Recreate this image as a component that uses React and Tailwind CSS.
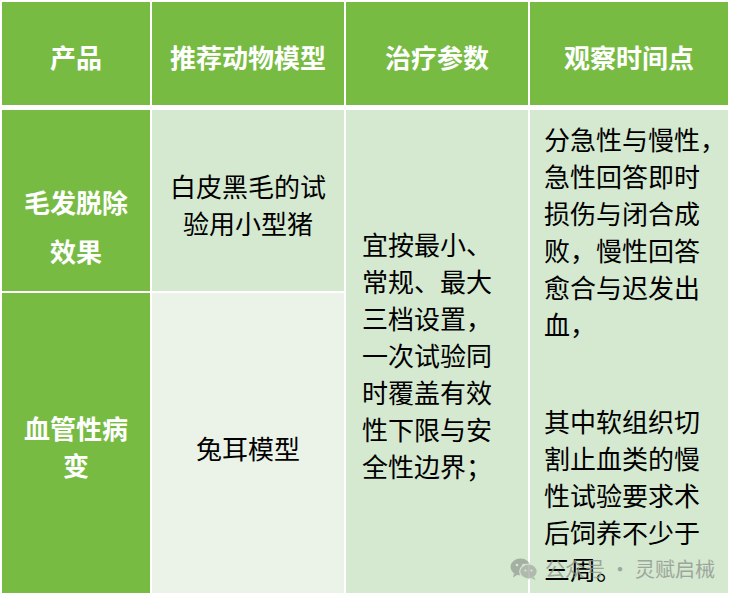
const font = { fontFamily: '"Noto Sans CJK SC", "Noto Sans", sans-serif' };

function WeChatIcon() {
  return (
    <svg width="28" height="22" viewBox="0 0 28 22" className="shrink-0">
      <ellipse cx="10.5" cy="9" rx="10" ry="8.5" fill="#9aa39a" />
      <path d="M4 15.5 L3 19.5 L7.5 16.8 Z" fill="#9aa39a" />
      <ellipse cx="18.5" cy="13.5" rx="8.8" ry="7.5" fill="#a7aea6" stroke="#d5e8d0" strokeWidth="1.2" />
      <path d="M24 19 L25.5 22 L21 20 Z" fill="#a7aea6" />
      <circle cx="7" cy="7" r="1.3" fill="#d5e8d0" />
      <circle cx="13.5" cy="7" r="1.3" fill="#d5e8d0" />
      <circle cx="15.5" cy="12.5" r="1.1" fill="#d5e8d0" />
      <circle cx="21.5" cy="12.5" r="1.1" fill="#d5e8d0" />
    </svg>
  );
}

export default function App() {
  const headers = ['产品', '推荐动物模型', '治疗参数', '观察时间点'];

  return (
    <div className="w-[731px] h-[596px] bg-white pt-[2px] pl-[2px] pr-[3px] pb-[3px] flex flex-col gap-[5px] relative overflow-hidden" style={font}>
      <div className="grid grid-cols-[148px_192px_182px_198px] gap-x-[2px] h-[103px]">
        {headers.map(h => (
          <div key={h} className="bg-[#78bb43] flex items-center justify-center pt-[5px] text-white font-bold text-[26px]">
            {h}
          </div>
        ))}
      </div>

      <div className="grid grid-cols-[148px_192px_182px_198px] grid-rows-[181px_300px] gap-x-[2px] gap-y-[2px] text-[26px] leading-[37px] text-black">
        <div className="bg-[#78bb43] flex flex-col items-center justify-center pt-[50px] text-white font-bold leading-[49px]">
          <span>毛发脱除</span>
          <span>效果</span>
        </div>
        <div className="bg-[#d5e8d0] flex flex-col items-center justify-center pt-[6px]">
          <span>白皮黑毛的试</span>
          <span>验用小型猪</span>
        </div>
        <div className="row-span-2 bg-[#d5e8d0] flex flex-col justify-center pl-[16px] pt-[5px] whitespace-nowrap">
          <span>宜按最小、</span>
          <span>常规、最大</span>
          <span>三档设置，</span>
          <span>一次试验同</span>
          <span>时覆盖有效</span>
          <span>性下限与安</span>
          <span>全性边界；</span>
        </div>
        <div className="row-span-2 bg-[#d5e8d0] flex flex-col pl-[14px] pt-[10px] whitespace-nowrap">
          <span>分急性与慢性，</span>
          <span>急性回答即时</span>
          <span>损伤与闭合成</span>
          <span>败，慢性回答</span>
          <span>愈合与迟发出</span>
          <span>血，</span>
          <span className="h-[60px]"></span>
          <span>其中软组织切</span>
          <span>割止血类的慢</span>
          <span>性试验要求术</span>
          <span>后饲养不少于</span>
          <span>三周。</span>
        </div>

        <div className="bg-[#78bb43] flex flex-col items-center justify-center pt-[6px] text-white font-bold">
          <span>血管性病</span>
          <span>变</span>
        </div>
        <div className="bg-[#ebf3e8] flex items-center justify-center pt-[8px]">
          兔耳模型
        </div>
      </div>

      <div className="absolute left-[510px] top-[554px] flex items-center text-[20px] text-[#8f978e] opacity-80 whitespace-nowrap">
        <WeChatIcon />
        <span className="ml-[7px]">公众号</span>
        <span className="mx-[5px]">·</span>
        <span>灵赋启械</span>
      </div>
    </div>
  );
}
